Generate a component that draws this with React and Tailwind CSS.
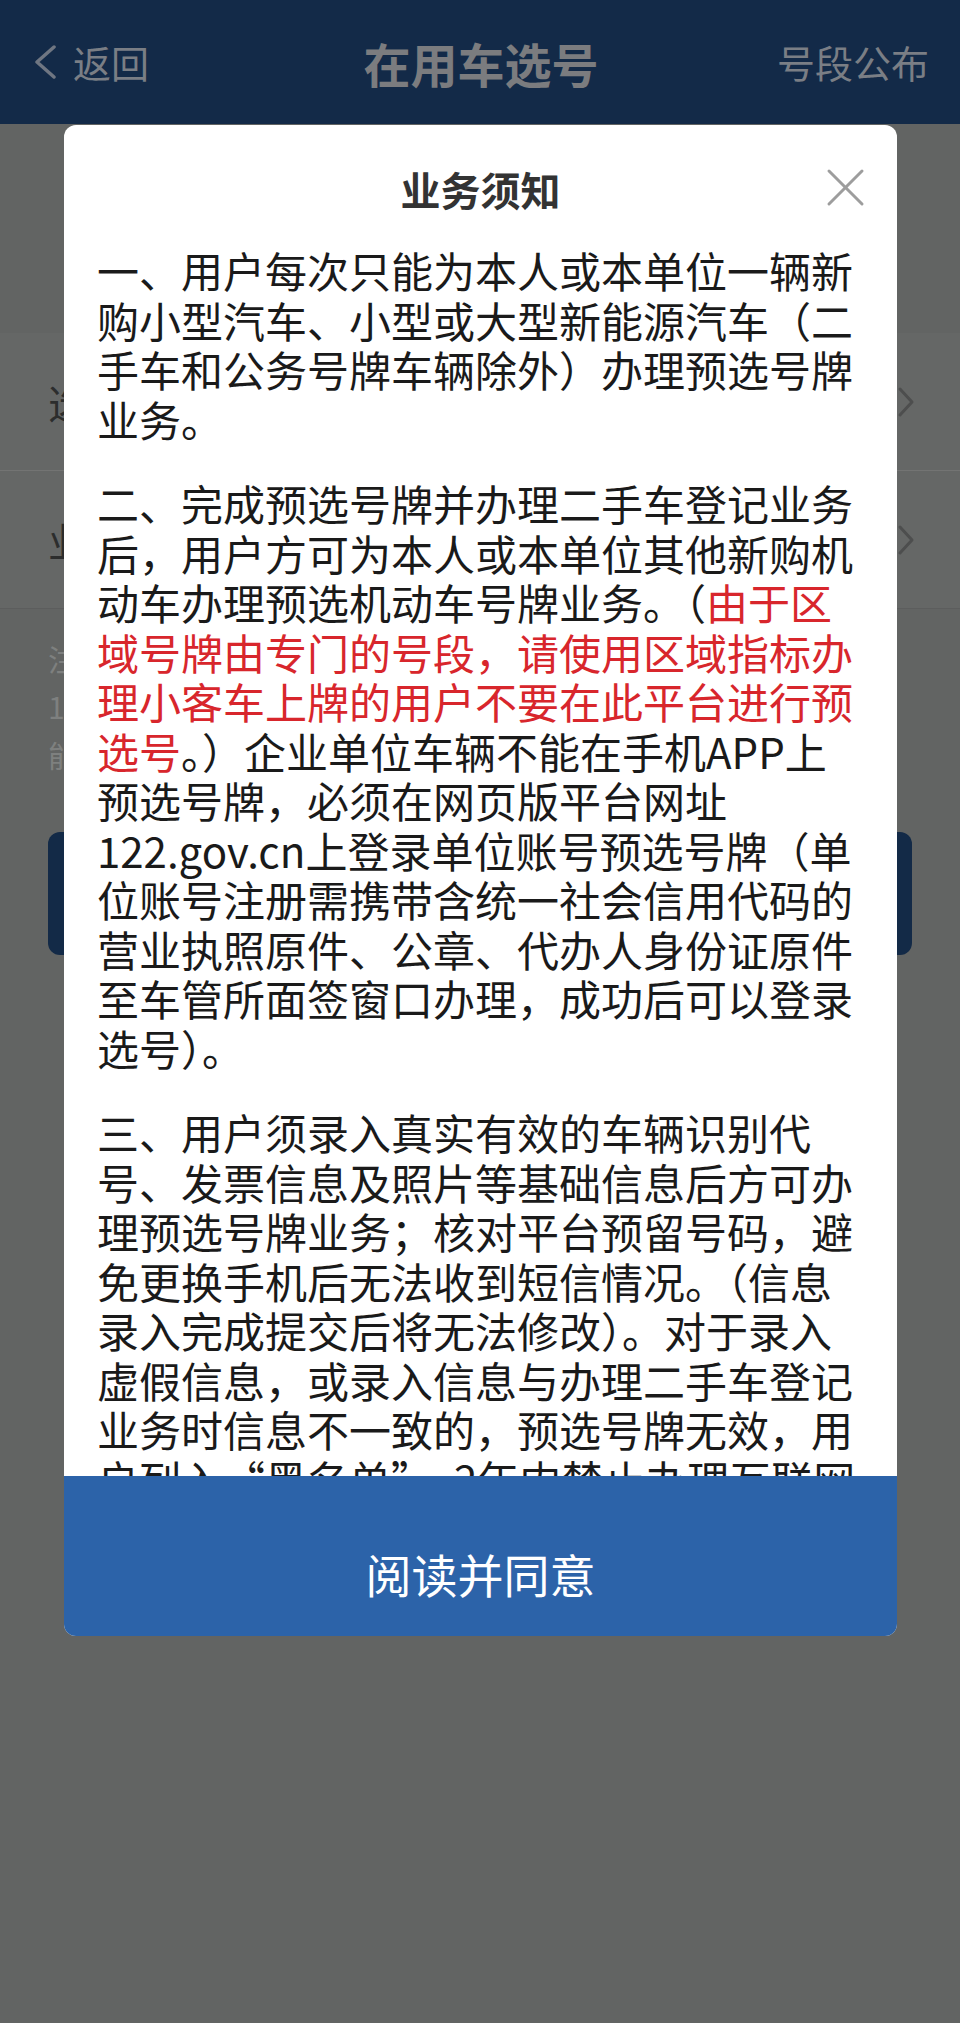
import React from 'react';

const para1 = [
  '一、用户每次只能为本人或本单位一辆新',
  '购小型汽车、小型或大型新能源汽车（二',
  '手车和公务号牌车辆除外）办理预选号牌',
  '业务。',
];

const para3 = [
  '三、用户须录入真实有效的车辆识别代',
  '号、发票信息及照片等基础信息后方可办',
  '理预选号牌业务；核对平台预留号码，避',
  '免更换手机后无法收到短信情况。（信息',
  '录入完成提交后将无法修改）。对于录入',
  '虚假信息，或录入信息与办理二手车登记',
  '业务时信息不一致的，预选号牌无效，用',
  '户列入“黑名单”，2年内禁止办理互联网',
  '预选号牌业务。',
];

function Line(props) {
  return <div className="whitespace-nowrap">{props.children}</div>;
}

function Red(props) {
  return <span className="text-[#d8262c]">{props.children}</span>;
}

function ChevronRight() {
  return (
    <svg width="18" height="32" viewBox="0 0 18 32" fill="none">
      <polyline points="3,3 15,16 3,29" stroke="#4d4e4e" strokeWidth="3" strokeLinecap="round" strokeLinejoin="round" />
    </svg>
  );
}

export default function App() {
  return (
    <div className="relative w-[960px] h-[2023px] overflow-hidden bg-[#626463] font-['Noto_Sans_CJK_SC',sans-serif]">
      {/* page behind the dim layer */}
      <header className="h-[124px] bg-[#132a48] flex items-center text-[#7a7e85]">
        <div className="flex-1 flex items-center pl-[33px] gap-[16px]">
          <svg width="24" height="34" viewBox="0 0 24 34" fill="none">
            <polyline points="21,2 4,17 21,32" stroke="#6f7682" strokeWidth="3.5" strokeLinecap="round" strokeLinejoin="round" />
          </svg>
          <span className="text-[38px] leading-none">返回</span>
        </div>
        <h1 className="text-[47px] font-bold leading-none text-[#7b7c7f]">在用车选号</h1>
        <div className="flex-1 flex justify-end pr-[31px]">
          <span className="text-[38px] leading-none">号段公布</span>
        </div>
      </header>

      <div className="mt-[209px] bg-[#656766]">
        <div className="h-[138px] flex items-center justify-between pl-[48px] pr-[45px] border-b border-[#737473]">
          <span className="text-[40px] text-[#2c2d2d]">选择号牌</span>
          <ChevronRight />
        </div>
        <div className="h-[138px] flex items-center justify-between pl-[48px] pr-[45px] border-b border-[#5c5d5d]">
          <span className="text-[40px] text-[#2c2d2d]">业务办理地</span>
          <ChevronRight />
        </div>
      </div>

      <div className="mt-[25px] px-[48px] text-[30px] leading-[48px] text-[#7e807f]">
        <div>注：请核对信息</div>
        <div>1、选号完成后请及时办理</div>
        <div>能源汽车请选择相应号段</div>
      </div>

      <div className="mx-[48px] mt-[54px] h-[123px] rounded-[12px] bg-[#132a47]"></div>

      {/* modal */}
      <div className="absolute left-[64px] top-[125px] w-[833px] rounded-[12px] bg-white overflow-hidden">
        <div className="relative pt-[38px] h-[120px]">
          <h2 className="text-center text-[40px] leading-[52px] font-bold text-[#333333]">业务须知</h2>
          <button className="absolute right-[32px] top-[43px] w-[39px] h-[39px]">
            <svg width="39" height="39" viewBox="0 0 39 39" fill="none">
              <line x1="3" y1="3" x2="36" y2="36" stroke="#9d9d9d" strokeWidth="3" strokeLinecap="round" />
              <line x1="36" y1="3" x2="3" y2="36" stroke="#9d9d9d" strokeWidth="3" strokeLinecap="round" />
            </svg>
          </button>
        </div>

        <div className="h-[1231px] overflow-hidden pl-[33px] text-[42px] leading-[49.5px] text-[#1a1a1a]">
          <div className="mb-[35px]">
            {para1.map((l) => <Line key={l}>{l}</Line>)}
          </div>
          <div className="mb-[35px]">
            <Line>二、完成预选号牌并办理二手车登记业务</Line>
            <Line>后，用户方可为本人或本单位其他新购机</Line>
            <Line>动车办理预选机动车号牌业务。（<Red>由于区</Red></Line>
            <Line><Red>域号牌由专门的号段，请使用区域指标办</Red></Line>
            <Line><Red>理小客车上牌的用户不要在此平台进行预</Red></Line>
            <Line><Red>选号</Red>。）企业单位车辆不能在手机APP上</Line>
            <Line>预选号牌，必须在网页版平台网址</Line>
            <Line>122.gov.cn上登录单位账号预选号牌（单</Line>
            <Line>位账号注册需携带含统一社会信用代码的</Line>
            <Line>营业执照原件、公章、代办人身份证原件</Line>
            <Line>至车管所面签窗口办理，成功后可以登录</Line>
            <Line>选号）。</Line>
          </div>
          <div>
            {para3.map((l) => <Line key={l}>{l}</Line>)}
          </div>
        </div>

        <button className="w-full h-[160px] pt-[72px] bg-[#2c63a9] text-white text-[46px] leading-[50px] flex items-start justify-center">
          阅读并同意
        </button>
      </div>
    </div>
  );
}
